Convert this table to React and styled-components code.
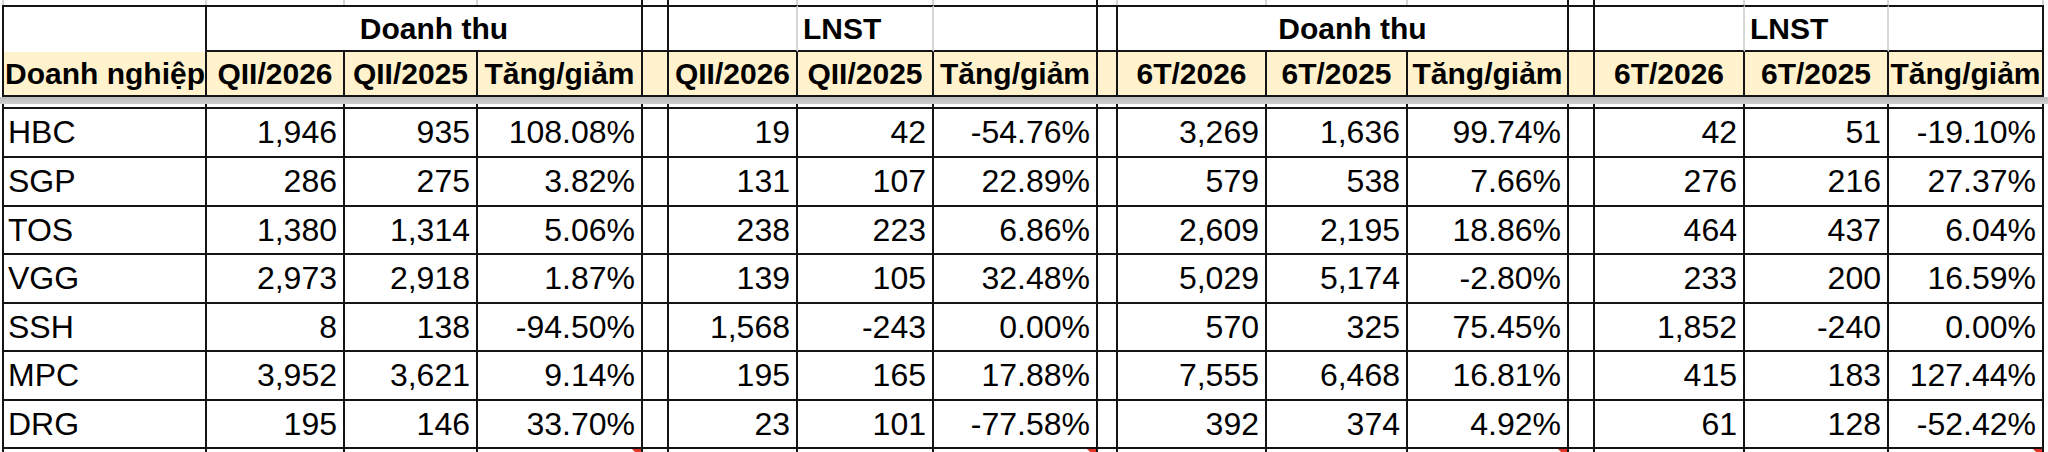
import styled, { createGlobalStyle } from "styled-components";

const GlobalStyle = createGlobalStyle`
  html, body {
    margin: 0;
    padding: 0;
    background: #fff;
  }
  body {
    font-family: "Liberation Sans", Arial, sans-serif;
    color: #000;
  }
`;

// column widths, left border of the sheet included in the first one
const COLS = [205, 138, 133, 165, 26, 129, 136, 164, 20, 149, 141, 161, 26, 150, 144, 155];
const LINE = "#141414";
const GRID = "#d6d6d6";
const YELLOW = "#fff2cc";

const Sheet = styled.div`
  width: 2048px;
  height: 452px;
  overflow: hidden;
  background: #fff;
`;

const Row = styled.div`
  display: grid;
  grid-template-columns: ${COLS.map((w) => `${w}px`).join(" ")};
  height: ${(p) => p.$h}px;
  margin-left: 2px;
`;

const SliverCell = styled.div`
  position: relative;
  box-sizing: border-box;
  border-right: 2px solid ${(p) => (p.$soft ? GRID : LINE)};
  border-left: ${(p) => (p.$first ? `2px solid ${p.$soft ? GRID : LINE}` : "none")};
`;

const Marker = styled.span`
  position: absolute;
  top: 0;
  right: 0;
  width: 0;
  height: 0;
  border-top: 9px solid #e3342a;
  border-left: 9px solid transparent;
`;

const GroupCell = styled.div`
  box-sizing: border-box;
  grid-column: span ${(p) => p.$span || 1};
  display: flex;
  align-items: center;
  justify-content: ${(p) => (p.$left ? "flex-start" : "center")};
  padding-left: ${(p) => (p.$left ? 5 : p.$span ? 20 : 0)}px;
  border-top: 2px solid ${LINE};
  border-bottom: ${(p) => (p.$open ? "none" : `2px solid ${LINE}`)};
  border-right: 2px solid ${(p) => (p.$soft ? GRID : LINE)};
  border-left: ${(p) => (p.$first ? `2px solid ${LINE}` : "none")};
  font-size: 30px;
  font-weight: 700;
  white-space: nowrap;
`;

const HeadCell = styled.div`
  box-sizing: border-box;
  display: flex;
  align-items: center;
  justify-content: ${(p) => (p.$left ? "flex-start" : "center")};
  padding-left: ${(p) => (p.$left ? 1 : 0)}px;
  background: ${YELLOW};
  border-bottom: 2px solid ${LINE};
  border-right: 2px solid ${LINE};
  border-left: ${(p) => (p.$first ? `2px solid ${LINE}` : "none")};
  font-size: 30px;
  font-weight: 700;
  white-space: nowrap;
  overflow: visible;
`;

const FreezeBar = styled.div`
  height: 7px;
  width: 2048px;
  background: linear-gradient(#bcbcbc, #cfcfcf);
`;

const Body = styled.div`
  margin-left: 2px;
  width: ${COLS.reduce((a, b) => a + b, 0)}px;
  border-top: 2px solid ${LINE};
`;

const DataRow = styled.div`
  display: grid;
  grid-template-columns: ${COLS.map((w) => `${w}px`).join(" ")};
  height: ${(p) => p.$h}px;
`;

const DataCell = styled.div`
  box-sizing: border-box;
  display: flex;
  align-items: center;
  justify-content: ${(p) => (p.$left ? "flex-start" : "flex-end")};
  padding: ${(p) => (p.$left ? "0 0 0 4px" : "0 6px 0 0")};
  border-bottom: 2px solid ${LINE};
  border-right: 2px solid ${LINE};
  border-left: ${(p) => (p.$first ? `2px solid ${LINE}` : "none")};
  font-size: 32px;
  white-space: nowrap;
`;

const HEADS = [
  "Doanh nghiệp", "QII/2026", "QII/2025", "Tăng/giảm", "",
  "QII/2026", "QII/2025", "Tăng/giảm", "",
  "6T/2026", "6T/2025", "Tăng/giảm", "",
  "6T/2026", "6T/2025", "Tăng/giảm",
];

const ROWS = [
  ["HBC", "1,946", "935", "108.08%", "19", "42", "-54.76%", "3,269", "1,636", "99.74%", "42", "51", "-19.10%"],
  ["SGP", "286", "275", "3.82%", "131", "107", "22.89%", "579", "538", "7.66%", "276", "216", "27.37%"],
  ["TOS", "1,380", "1,314", "5.06%", "238", "223", "6.86%", "2,609", "2,195", "18.86%", "464", "437", "6.04%"],
  ["VGG", "2,973", "2,918", "1.87%", "139", "105", "32.48%", "5,029", "5,174", "-2.80%", "233", "200", "16.59%"],
  ["SSH", "8", "138", "-94.50%", "1,568", "-243", "0.00%", "570", "325", "75.45%", "1,852", "-240", "0.00%"],
  ["MPC", "3,952", "3,621", "9.14%", "195", "165", "17.88%", "7,555", "6,468", "16.81%", "415", "183", "127.44%"],
  ["DRG", "195", "146", "33.70%", "23", "101", "-77.58%", "392", "374", "4.92%", "61", "128", "-52.42%"],
];

// put the empty spacer columns between the groups
const expand = (r) => [r[0], r[1], r[2], r[3], "", r[4], r[5], r[6], "", r[7], r[8], r[9], "", r[10], r[11], r[12]];

const TOP_DARK = [3, 4, 7, 11, 12];
const MARKED = [3, 7, 11, 15];

export default function App() {
  return (
    <>
      <GlobalStyle />
      <Sheet>
        <Row $h={5}>
          {COLS.map((_, i) => (
            <SliverCell key={i} $first={i === 0} $soft={!TOP_DARK.includes(i)} />
          ))}
        </Row>

        <Row $h={47}>
          <GroupCell $first $open />
          <GroupCell $span={3}>Doanh thu</GroupCell>
          <GroupCell />
          <GroupCell $soft />
          <GroupCell $soft $left>LNST</GroupCell>
          <GroupCell />
          <GroupCell />
          <GroupCell $span={3}>Doanh thu</GroupCell>
          <GroupCell />
          <GroupCell $soft />
          <GroupCell $soft $left>LNST</GroupCell>
          <GroupCell />
        </Row>

        <Row $h={45}>
          {HEADS.map((h, i) => (
            <HeadCell key={i} $first={i === 0} $left={i === 0}>
              {h}
            </HeadCell>
          ))}
        </Row>

        <FreezeBar />

        <Row $h={3}>
          {COLS.map((_, i) => (
            <SliverCell key={i} $first={i === 0} />
          ))}
        </Row>

        <Body>
          {ROWS.map((r, ri) => (
            <DataRow key={r[0]} $h={ri === 0 || ri % 2 === 1 ? 49 : 48}>
              {expand(r).map((v, i) => (
                <DataCell key={i} $first={i === 0} $left={i === 0}>
                  {v}
                </DataCell>
              ))}
            </DataRow>
          ))}
          <DataRow $h={4}>
            {COLS.map((_, i) => (
              <SliverCell key={i} $first={i === 0}>
                {MARKED.includes(i) && <Marker />}
              </SliverCell>
            ))}
          </DataRow>
        </Body>
      </Sheet>
    </>
  );
}
